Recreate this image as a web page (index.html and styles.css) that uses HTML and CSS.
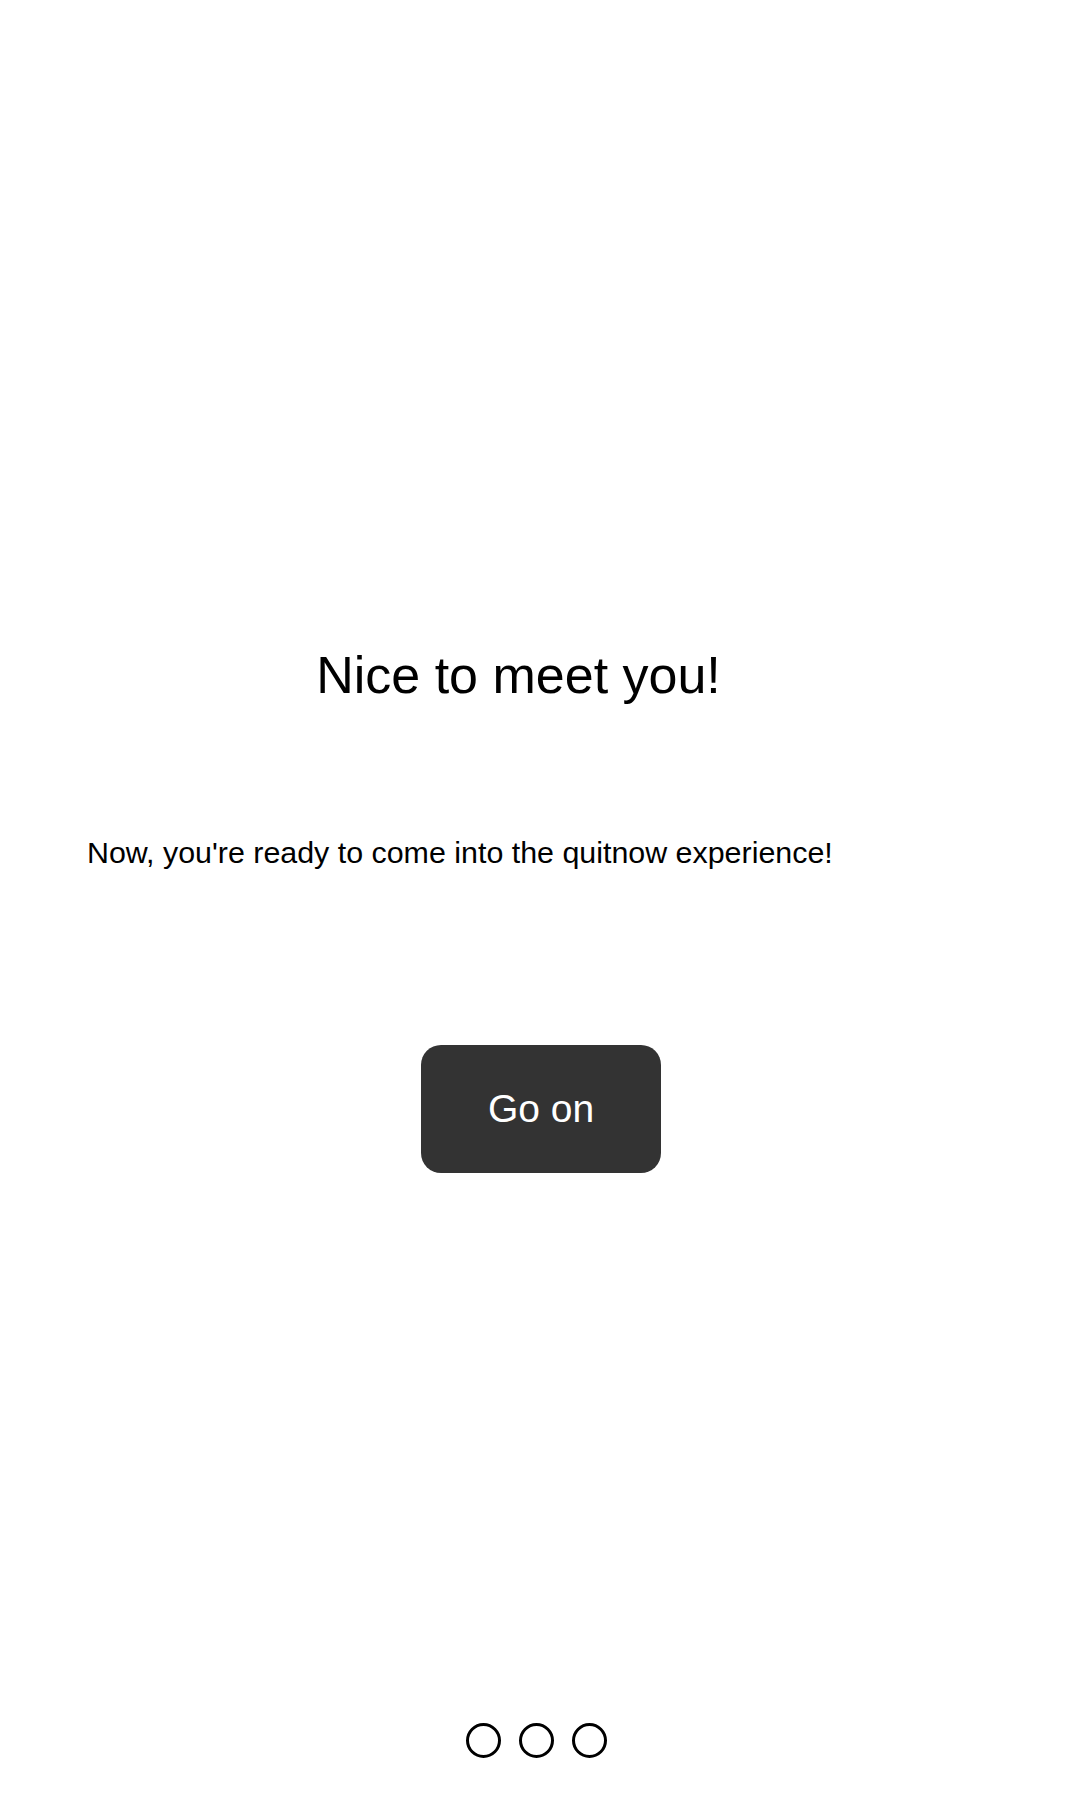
FILE: index.html
```html
<!DOCTYPE html>
<html>
<head>
<meta charset="utf-8">
<link rel="stylesheet" href="styles.css">
</head>
<body>
<div class="screen">
  <main class="content">
    <h1 class="title">Nice to meet you!</h1>
    <p class="subtitle">Now, you're ready to come into the quitnow experience!</p>
    <div class="actions">
      <button class="go-btn">Go on</button>
    </div>
  </main>
  <nav class="dots">
    <span class="dot"></span>
    <span class="dot"></span>
    <span class="dot"></span>
  </nav>
</div>
</body>
</html>
```
FILE: styles.css
```css
html, body {
  margin: 0;
  padding: 0;
  background: #ffffff;
}
body {
  font-family: "Liberation Sans", Arial, sans-serif;
  color: #000;
}
.screen {
  width: 1080px;
  height: 1800px;
  display: flex;
  flex-direction: column;
}
.content {
  flex: 1;
  display: flex;
  flex-direction: column;
  padding-top: 645px;
}
.title {
  margin: 0;
  font-size: 52px;
  font-weight: normal;
  line-height: 61px;
  text-align: center;
  padding-right: 43px;
}
.subtitle {
  margin: 129px 0 0 0;
  padding-left: 87px;
  font-size: 30.4px;
  line-height: 34px;
}
.actions {
  display: flex;
  justify-content: center;
  margin-top: 176px;
  padding-left: 2px;
}
.go-btn {
  width: 240px;
  height: 128px;
  border: none;
  border-radius: 20px;
  background: #333333;
  color: #ffffff;
  font-family: "Liberation Sans", Arial, sans-serif;
  font-size: 39px;
  padding: 0;
}
.dots {
  display: flex;
  justify-content: center;
  gap: 18px;
  padding-right: 8px;
  padding-bottom: 42px;
}
.dot {
  width: 29px;
  height: 29px;
  border: 3px solid #000;
  border-radius: 50%;
}
```
